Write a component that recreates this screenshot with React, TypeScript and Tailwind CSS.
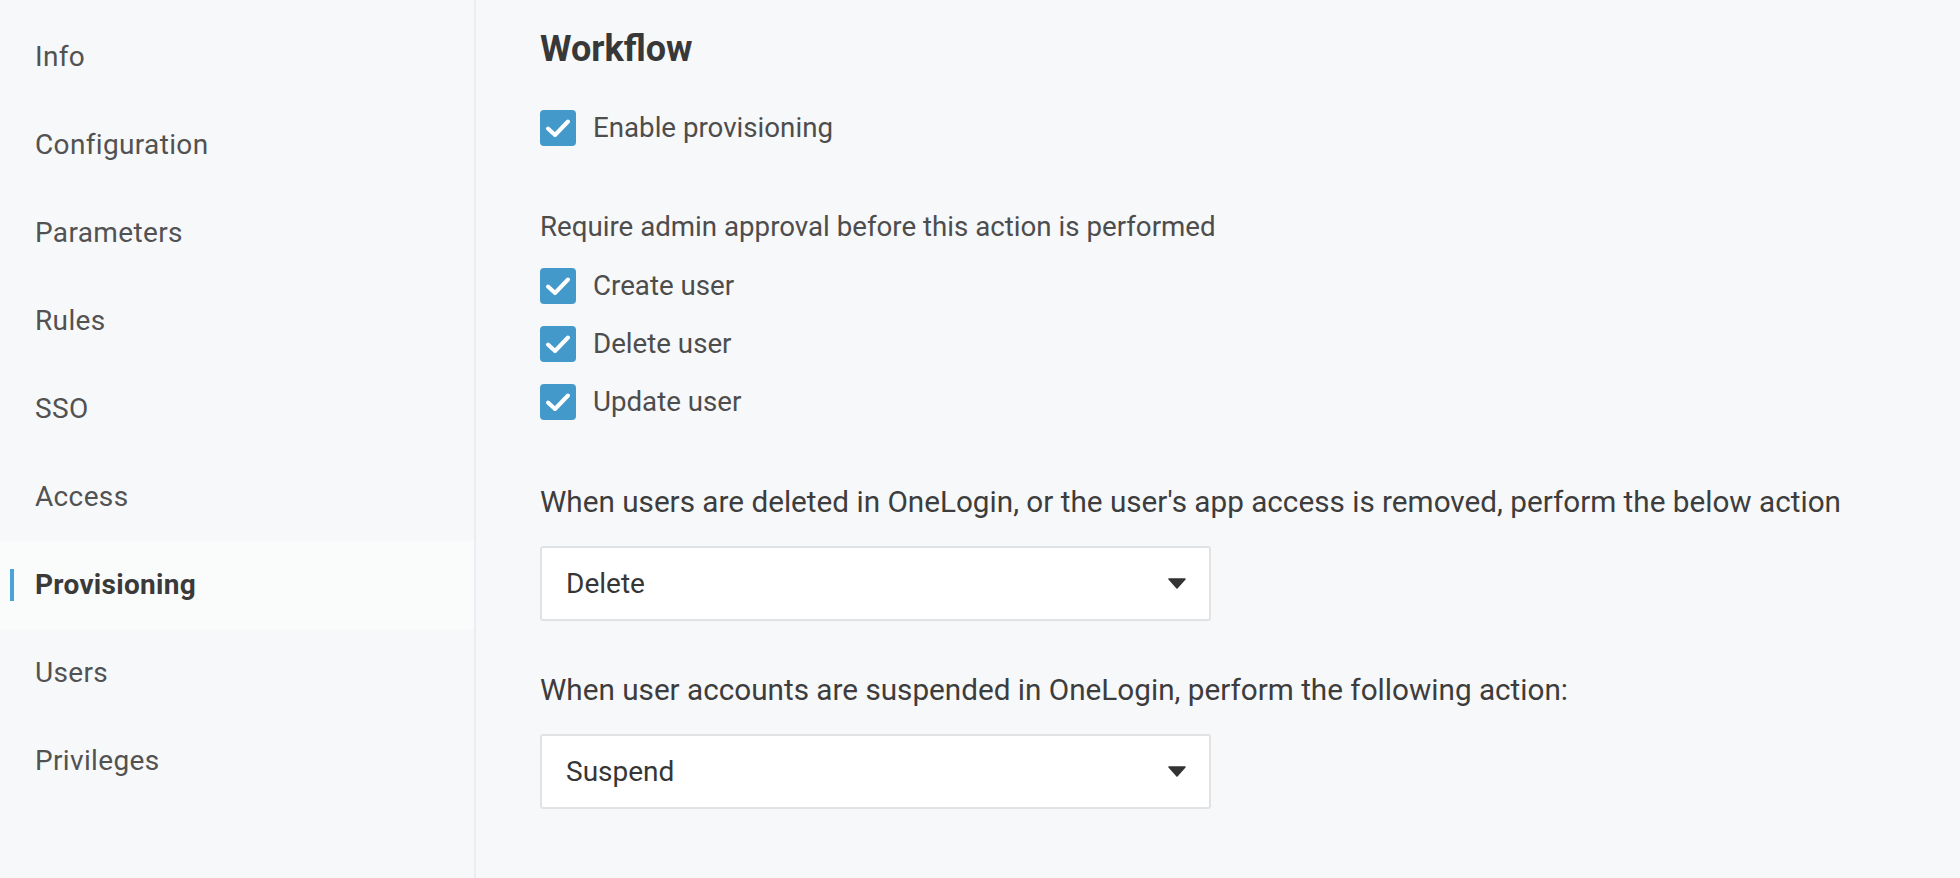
import React from "react";

const navItems = ["Info", "Configuration", "Parameters", "Rules", "SSO", "Access", "Provisioning", "Users", "Privileges"];

function Check() {
  return (
    <span className="flex h-[36px] w-[36px] shrink-0 items-center justify-center rounded-[4px] bg-[#4499cb]">
      <svg width="36" height="36" viewBox="0 0 36 36" fill="none">
        <polyline points="8,18.5 15,25 28,11.5" stroke="#ffffff" strokeWidth="4" strokeLinecap="round" strokeLinejoin="round" />
      </svg>
    </span>
  );
}

function CheckRow({ label }: { label: string }) {
  return (
    <div className="flex h-[36px] items-center gap-[17px]">
      <Check />
      <span className="text-[27.7px] leading-[36px] text-[#4d4d4d]">{label}</span>
    </div>
  );
}

function Select({ value }: { value: string }) {
  return (
    <div className="flex h-[75px] w-[671px] items-center justify-between rounded-[3px] border-2 border-[#e1e2e4] bg-white pl-[24px] pr-[23px]">
      <span className="text-[28px] leading-[36px] text-[#363636]">{value}</span>
      <svg width="18" height="11" viewBox="0 0 18 11">
        <polygon points="1,1 17,1 9,10" fill="#333333" stroke="#333333" strokeWidth="1.5" strokeLinejoin="round" />
      </svg>
    </div>
  );
}

export default function App() {
  return (
    <div className="flex h-[878px] w-[1960px] overflow-hidden bg-[#f7f8fa] font-['Roboto',sans-serif]">
      <aside className="flex h-full w-[476px] shrink-0 flex-col border-r-2 border-[#ebedf0] pt-[13px]">
        {navItems.map((item) => {
          const active = item === "Provisioning";
          return (
            <div
              key={item}
              className={
                active
                  ? "relative flex h-[88px] items-center bg-[#fafbfb] pl-[35px]"
                  : "relative flex h-[88px] items-center pl-[35px]"
              }
            >
              {active && <span className="absolute left-[10px] top-[28px] h-[32px] w-[4px] bg-[#4aa4dc]" />}
              <span
                className={
                  active
                    ? "text-[28px] font-bold leading-[36px] tracking-[0.3px] text-[#3a3a3a]"
                    : "text-[28px] leading-[36px] tracking-[0.35px] text-[#525252]"
                }
              >
                {item}
              </span>
            </div>
          );
        })}
      </aside>
      <main className="flex flex-1 flex-col pl-[64px] pt-[27px]">
        <h2 className="text-[36px] font-bold leading-[44px] text-[#383838]">Workflow</h2>
        <div className="mt-[39px]">
          <CheckRow label="Enable provisioning" />
        </div>
        <p className="mt-[63px] text-[27.7px] leading-[36px] text-[#4d4d4d]">
          Require admin approval before this action is performed
        </p>
        <div className="mt-[23px] flex flex-col gap-[22px]">
          <CheckRow label="Create user" />
          <CheckRow label="Delete user" />
          <CheckRow label="Update user" />
        </div>
        <p className="mt-[64px] text-[29.7px] leading-[36px] text-[#3d3d3d]">
          When users are deleted in OneLogin, or the user's app access is removed, perform the below action
        </p>
        <div className="mt-[26px]">
          <Select value="Delete" />
        </div>
        <p className="mt-[51px] text-[29.7px] leading-[36px] text-[#3d3d3d]">
          When user accounts are suspended in OneLogin, perform the following action:
        </p>
        <div className="mt-[26px]">
          <Select value="Suspend" />
        </div>
      </main>
    </div>
  );
}
